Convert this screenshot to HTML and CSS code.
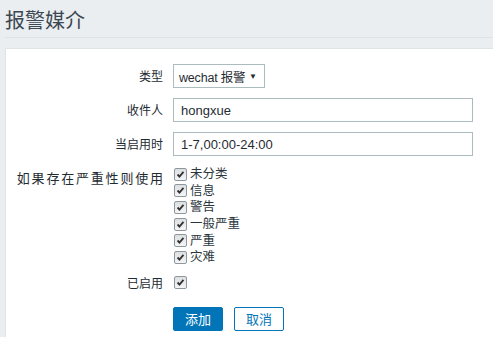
FILE: index.html
```html
<!DOCTYPE html>
<html>
<head>
<meta charset="utf-8">
<link rel="stylesheet" href="styles.css">
</head>
<body>
<div class="header"><h1 class="title">报警媒介</h1></div>
<div class="panel">
  <form class="form">
    <div class="row">
      <div class="label">类型</div>
      <div class="control">
        <div class="select"><span class="select-text">wechat 报警</span><span class="arrow">▼</span></div>
      </div>
    </div>
    <div class="row">
      <div class="label">收件人</div>
      <div class="control"><div class="input">hongxue</div></div>
    </div>
    <div class="row">
      <div class="label">当启用时</div>
      <div class="control"><div class="input">1-7,00:00-24:00</div></div>
    </div>
    <div class="row row-list">
      <div class="label label-list">如果存在严重性则使用</div>
      <div class="control">
        <ul class="checks">
          <li><span class="cb"><svg viewBox="0 0 13 13" width="13" height="13"><path d="M3 6.5 L5.3 9 L10 3.5" fill="none" stroke="#333" stroke-width="2.2"/></svg></span><span class="ct">未分类</span></li>
          <li><span class="cb"><svg viewBox="0 0 13 13" width="13" height="13"><path d="M3 6.5 L5.3 9 L10 3.5" fill="none" stroke="#333" stroke-width="2.2"/></svg></span><span class="ct">信息</span></li>
          <li><span class="cb"><svg viewBox="0 0 13 13" width="13" height="13"><path d="M3 6.5 L5.3 9 L10 3.5" fill="none" stroke="#333" stroke-width="2.2"/></svg></span><span class="ct">警告</span></li>
          <li><span class="cb"><svg viewBox="0 0 13 13" width="13" height="13"><path d="M3 6.5 L5.3 9 L10 3.5" fill="none" stroke="#333" stroke-width="2.2"/></svg></span><span class="ct">一般严重</span></li>
          <li><span class="cb"><svg viewBox="0 0 13 13" width="13" height="13"><path d="M3 6.5 L5.3 9 L10 3.5" fill="none" stroke="#333" stroke-width="2.2"/></svg></span><span class="ct">严重</span></li>
          <li><span class="cb"><svg viewBox="0 0 13 13" width="13" height="13"><path d="M3 6.5 L5.3 9 L10 3.5" fill="none" stroke="#333" stroke-width="2.2"/></svg></span><span class="ct">灾难</span></li>
        </ul>
      </div>
    </div>
    <div class="row row-enabled">
      <div class="label">已启用</div>
      <div class="control"><span class="cb"><svg viewBox="0 0 13 13" width="13" height="13"><path d="M3 6.5 L5.3 9 L10 3.5" fill="none" stroke="#333" stroke-width="2.2"/></svg></span></div>
    </div>
    <div class="row row-buttons">
      <div class="label"></div>
      <div class="control buttons">
        <span class="btn btn-primary">添加</span>
        <span class="btn btn-alt">取消</span>
      </div>
    </div>
  </form>
</div>
</body>
</html>
```
FILE: styles.css
```css
html, body {
  margin: 0;
  padding: 0;
  background: #ebeef0;
  overflow: hidden;
  width: 493px;
  height: 337px;
}
body {
  font-family: "Liberation Sans", "Noto Sans CJK SC", sans-serif;
  font-size: 12px;
  color: #1f2c33;
}
.header {
  margin: 0 0 0 5px;
  padding: 7px 0 5px 0;
  border-bottom: 1px solid #dde2e5;
  height: 25px;
}
.title {
  margin: 0;
  font-size: 20px;
  font-weight: normal;
  line-height: 25px;
  color: #3b4852;
  font-family: "Noto Sans CJK SC", sans-serif;
}
.panel {
  margin: 10px 0 0 5px;
  background: #fff;
  border: 1px solid #dfe4e7;
  border-right: none;
  padding: 15px 0 10px 0;
  height: 270px;
}
.form {
  display: flex;
  flex-direction: column;
  gap: 10px;
}
.row {
  display: flex;
  align-items: center;
  gap: 10px;
}
.label {
  width: 157px;
  text-align: right;
  flex: none;
  font-family: "Noto Sans CJK SC", sans-serif;
  font-size: 12px;
  line-height: 14px;
}
.control {
  flex: 1;
  display: flex;
  align-items: center;
}
.select {
  box-sizing: border-box;
  width: 92px;
  height: 24px;
  border: 1px solid #acbbc0;
  display: flex;
  align-items: center;
  padding: 0 7px 0 5px;
  white-space: nowrap;
}
.select-text {
  font-family: "Liberation Sans", "Noto Sans CJK SC", sans-serif;
  font-size: 12.5px;
  letter-spacing: -0.2px;
}
.arrow {
  margin-left: auto;
  font-size: 8px;
}
.input {
  box-sizing: border-box;
  width: 300px;
  height: 24px;
  border: 1px solid #acbbc0;
  display: flex;
  align-items: center;
  padding: 0 7px;
  font-size: 13px;
}
.row-list {
  align-items: flex-start;
}
.label-list {
  padding-top: 5px;
  font-size: 13px;
  letter-spacing: 1.8px;
  margin-right: -1.8px;
  width: 158.8px;
}
.checks {
  list-style: none;
  margin: 0;
  padding: 0;
}
.checks li {
  display: flex;
  align-items: center;
  height: 16.6px;
}
.ct {
  font-family: "Liberation Sans", "Noto Sans CJK SC", sans-serif;
  font-size: 12.5px;
  line-height: 14px;
  color: #2a363d;
}
.cb {
  box-sizing: border-box;
  width: 13px;
  height: 13px;
  margin: 0 3px 0 1px;
  border: 1px solid #8e979c;
  border-radius: 2px;
  background: linear-gradient(#dcdfe1, #f4f5f6);
  display: inline-flex;
  align-items: center;
  justify-content: center;
  flex: none;
}
.cb svg {
  display: block;
  width: 11px;
  height: 11px;
}
.row-enabled {
  height: 14px;
  margin-bottom: 7px;
}
.buttons {
  gap: 11px;
}
.btn {
  box-sizing: border-box;
  width: 50px;
  height: 24px;
  display: inline-flex;
  align-items: center;
  justify-content: center;
  border-radius: 2px;
  font-family: "Noto Sans CJK SC", sans-serif;
  font-size: 13px;
}
.btn-primary {
  background: #0275b8;
  color: #fff;
  border: 1px solid #0275b8;
}
.btn-alt {
  background: #fff;
  color: #0275b8;
  border: 1px solid #0275b8;
}
```
